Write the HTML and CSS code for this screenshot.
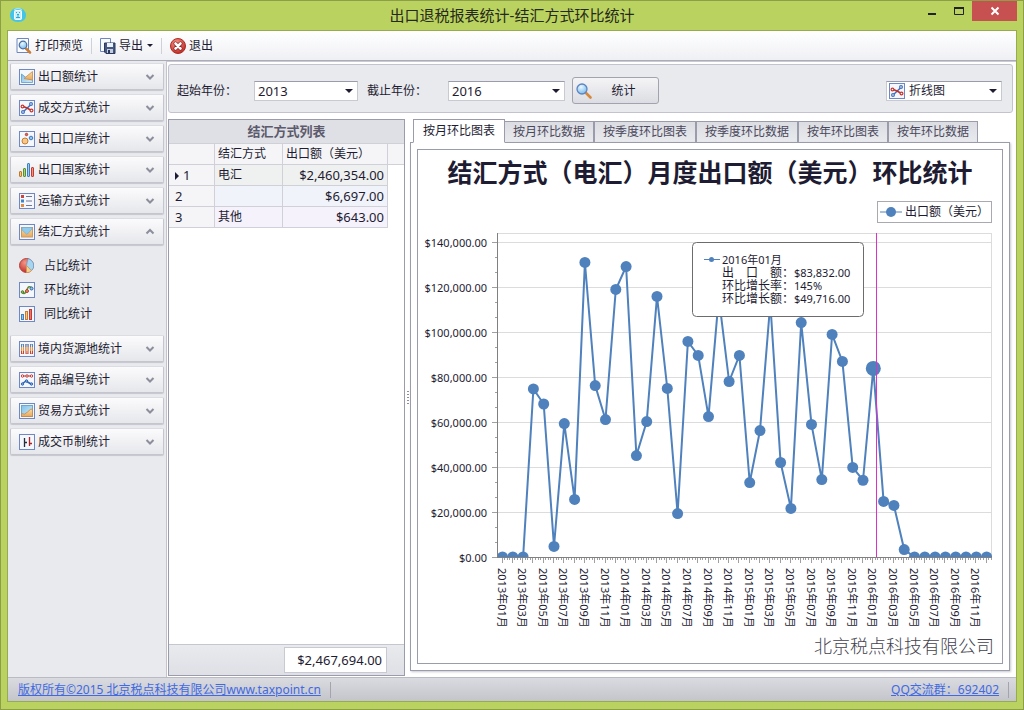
FILE: index.html
```html
<!DOCTYPE html>
<html lang="zh-CN">
<head>
<meta charset="utf-8">
<title>出口退税报表统计-结汇方式环比统计</title>
<link rel="stylesheet" href="styles.css">
</head>
<body>
<svg class="sprite" aria-hidden="true">
  <defs>
    <linearGradient id="sky" x1="0" y1="0" x2="1" y2="1"><stop offset="0" stop-color="#7fc0ea"/><stop offset="1" stop-color="#d3ecf8"/></linearGradient>
    <linearGradient id="sand" x1="0" y1="0" x2="0" y2="1"><stop offset="0" stop-color="#f8dca0"/><stop offset="1" stop-color="#eaa75c"/></linearGradient>
    <radialGradient id="redball" cx=".4" cy=".3" r=".8"><stop offset="0" stop-color="#f4988a"/><stop offset="1" stop-color="#b81f1a"/></radialGradient>
    <radialGradient id="lens" cx=".4" cy=".3" r=".8"><stop offset="0" stop-color="#eaf8ff"/><stop offset="1" stop-color="#6db4ea"/></radialGradient>
  </defs>
  <symbol id="frame" viewBox="0 0 16 16"><rect x=".5" y=".5" width="15" height="15" fill="#f4f7fc" stroke="#6f88c4"/></symbol>
  <symbol id="i-area" viewBox="0 0 16 16"><use href="#frame"/><path d="M2.500 5l5 4 6 2v2.500h-11z" fill="url(#sky)" stroke="#5c9bcc" stroke-width=".8"/><path d="M5 9.500l8.500-7v8.500z" fill="url(#sand)" stroke="#c78a4a" stroke-width=".8"/></symbol>
  <symbol id="i-cross" viewBox="0 0 16 16"><use href="#frame"/><path d="M3.500 12.500L12.500 4" stroke="#3f6fc0" stroke-width="1.500"/><path d="M3 6l5 2 4.500 2.500" stroke="#c0302a" stroke-width="1.500" fill="none"/><g fill="#fff" stroke-width="1.200"><g stroke="#3f6fc0"><circle cx="4" cy="12" r="1.400"/><circle cx="12" cy="4" r="1.400"/></g><g stroke="#c8352e"><circle cx="3.500" cy="6.500" r="1.400"/><circle cx="12.500" cy="10.500" r="1.400"/></g></g></symbol>
  <symbol id="i-bubble" viewBox="0 0 16 16"><use href="#frame"/><circle cx="6" cy="10" r="3" fill="#f4c98a" stroke="#c67a35"/><circle cx="12" cy="7" r="1.800" fill="#8fc4ee" stroke="#3d79bb"/><circle cx="7.500" cy="3.500" r="1.200" fill="#e06858" stroke="#b83a31"/></symbol>
  <symbol id="i-bars" viewBox="0 0 16 16"><g stroke-width="1"><rect x=".5" y="9.500" width="2" height="5" rx=".5" fill="#f6c378" stroke="#bd7829"/><rect x="4.500" y="6.500" width="2" height="8" rx=".5" fill="#a9d47b" stroke="#5b8e2c"/><rect x="8.500" y="1.500" width="2" height="13" rx=".5" fill="#9accf3" stroke="#3f7fc0"/><rect x="12.500" y="5.500" width="2" height="9" rx=".5" fill="#f19383" stroke="#c33b32"/></g></symbol>
  <symbol id="i-list" viewBox="0 0 16 16"><use href="#frame"/><rect x="2" y="2" width="3" height="3" fill="#cd463b"/><rect x="2" y="6.500" width="3" height="3" fill="#3f85cb"/><rect x="2" y="11" width="3" height="3" fill="#e28a3d"/><path d="M7 3.500h6M7 8h6M7 12.500h6" stroke="#6f7896"/></symbol>
  <symbol id="i-mail" viewBox="0 0 16 16"><use href="#frame"/><rect x="2.500" y="3.500" width="11" height="9.500" fill="url(#sand)" stroke="#c79a62"/><path d="M3 3.500h10v1.500l-4.500 5h-1L3 6z" fill="#8ecbee" stroke="#6fa9cf" stroke-width=".6"/></symbol>
  <symbol id="i-pie" viewBox="0 0 16 16"><circle cx="7.500" cy="7.500" r="7" fill="url(#redball)" stroke="#b6423c"/><path d="M7.500 7.500L9 .7a7 7 0 0 1 3.500 12z" fill="#a6d5f2" stroke="#5c9dcc" stroke-width=".6"/><path d="M7.500 7.500l5 5.200a7 7 0 0 1-5 1.900z" fill="#f7cf8c" stroke="#cf9950" stroke-width=".6"/></symbol>
  <symbol id="i-curve" viewBox="0 0 16 16"><use href="#frame"/><path d="M3.500 10.500q1.500 2 3 0t2-4q1-3 4-1" fill="none" stroke="#5c8f34" stroke-width="1.500"/><circle cx="3.500" cy="10" r="1.300" fill="#8dc059" stroke="#4c7d2a"/><circle cx="8" cy="9" r="1.500" fill="#ed8b62" stroke="#b93f28"/><circle cx="12.500" cy="6.500" r="1.500" fill="#8fc6ef" stroke="#2e62a8"/></symbol>
  <symbol id="i-bars2" viewBox="0 0 16 16"><use href="#frame"/><rect x="2.500" y="8.500" width="2" height="5" fill="#90c7f1" stroke="#417fbe"/><rect x="6.500" y="5.500" width="2" height="8" fill="#f7c77d" stroke="#c27c33"/><rect x="10.500" y="3.500" width="2" height="10" fill="#ee7465" stroke="#c23b32"/></symbol>
  <symbol id="i-stack" viewBox="0 0 16 16"><use href="#frame"/><g id="st"><rect x="2" y="3" width="3" height="10" fill="#c8423a"/><rect x="2" y="3" width="3" height="3" fill="#4a8acb"/><rect x="2" y="6" width="3" height="4" fill="#e09a4c"/><path d="M3.500 3.500v9" stroke="#fbe3c8"/></g><use href="#st" x="4.500"/><use href="#st" x="9"/></symbol>
  <symbol id="i-lines" viewBox="0 0 16 16"><use href="#frame"/><path d="M3 4h10" stroke="#c8352e"/><path d="M3 12l4-3 5 3" fill="none" stroke="#2f65b4" stroke-width="1.500"/><g fill="#fff" stroke="#c8352e"><circle cx="3.500" cy="4" r="1.200"/><circle cx="8" cy="4" r="1.200"/><circle cx="12.500" cy="4" r="1.200"/></g><g fill="#7db2e6" stroke="#2f65b4"><circle cx="3.500" cy="12" r="1.200"/><circle cx="7.500" cy="9" r="1.200"/><circle cx="12.500" cy="12" r="1.200"/></g></symbol>
  <symbol id="i-hill" viewBox="0 0 16 16"><use href="#frame"/><rect x="2.500" y="2.500" width="11" height="11" fill="url(#sky)" stroke="#6fa6cc"/><path d="M2.500 10.500q3 2 6-1.500t5-3v7.500h-11z" fill="url(#sand)" stroke="#c0874a" stroke-width=".8"/></symbol>
  <symbol id="i-stock" viewBox="0 0 16 16"><use href="#frame"/><path d="M5.500 4v9M5.500 8.500H8" stroke="#272b3a" stroke-width="1.300"/><path d="M10.500 3v9M10.500 9.500H13" stroke="#b21f24" stroke-width="1.300"/></symbol>
  <symbol id="i-preview" viewBox="0 0 16 16"><path d="M1 .5h11.500v14H1z" fill="#fafcff" stroke="#6d86bd"/><path d="M10 10.500l4 4" stroke="#c87c35" stroke-width="2.500" stroke-linecap="round"/><circle cx="7" cy="7" r="3.800" fill="url(#lens)" stroke="#4c6da0" stroke-width="1.200"/></symbol>
  <symbol id="i-export" viewBox="0 0 16 16"><path d="M.5.500h10v13H.500z" fill="#f8fbff" stroke="#6d86bd"/><path d="M4.500 5h10.500v10.500H6L4.500 14z" fill="#46587f" stroke="#2b3a5c"/><rect x="7" y="5" width="6" height="4" fill="#e9f1fb"/><rect x="7" y="11" width="6" height="4" fill="#c5cede"/><rect x="8" y="12" width="2" height="3" fill="#2b3a5c"/></symbol>
  <symbol id="i-exit" viewBox="0 0 16 16"><circle cx="8" cy="8" r="7.500" fill="url(#redball)" stroke="#b02b25"/><path d="M5.500 5.500l5 5M10.500 5.500l-5 5" stroke="#8d1a18" stroke-width="4" stroke-linecap="round"/><path d="M5.500 5.500l5 5M10.500 5.500l-5 5" stroke="#fff" stroke-width="2.600" stroke-linecap="round"/></symbol>
  <symbol id="i-search" viewBox="0 0 16 16"><path d="M10 10l4.500 4.500" stroke="#d6893e" stroke-width="2.600" stroke-linecap="round"/><circle cx="6" cy="6" r="5" fill="url(#lens)" stroke="#5d84c0" stroke-width="1.300"/></symbol>
  <symbol id="i-app" viewBox="0 0 16 16"><path d="M4 1.500h8q4 3 4 6.500 0 7-8 7T0 8q0-4 4-6.500z" fill="#43c4ea"/><path d="M4 3q4-3 8 0" fill="none" stroke="#9ee6f8" stroke-width="1.500"/><rect x="4.500" y="3.500" width="7" height="9" rx="1" fill="#c8f1fb" stroke="#fff"/><path d="M6 5.500h1M9 5.500h1M7 7.500h2M6 10.500h4M8 8v2" stroke="#2fa9d4"/></symbol>
  <symbol id="i-down" viewBox="0 0 10 8"><path d="M1.500 2L5 5.500 8.500 2" fill="none" stroke="#8d8e9c" stroke-width="2"/></symbol>
  <symbol id="i-up" viewBox="0 0 10 8"><path d="M1.500 5.500L5 2l3.500 3.500" fill="none" stroke="#8d8e9c" stroke-width="2"/></symbol>
</svg>

<div class="window">
  <header class="titlebar">
    <svg class="icon app-icon"><use href="#i-app"/></svg>
    <h1 class="window-title">出口退税报表统计-结汇方式环比统计</h1>
    <div class="window-buttons">
      <button class="win-btn" aria-label="最小化"><svg width="10" height="10"><path d="M1 8h8" stroke="#222" stroke-width="2"/></svg></button>
      <button class="win-btn" aria-label="最大化"><svg width="10" height="10"><path d="M.5 1v7.500h9V1" fill="none" stroke="#222"/><path d="M0 2h10" stroke="#222" stroke-width="2"/></svg></button>
      <button class="win-btn win-close" aria-label="关闭"><svg width="10" height="10"><path d="M1.500 1.500l7 7M8.500 1.500l-7 7" stroke="#fff" stroke-width="2"/></svg></button>
    </div>
  </header>

  <div class="client">
    <div class="toolbar">
      <button class="tool"><svg class="icon"><use href="#i-preview"/></svg>打印预览</button>
      <span class="tool-sep"></span>
      <button class="tool"><svg class="icon"><use href="#i-export"/></svg>导出<span class="caret"></span></button>
      <span class="tool-sep"></span>
      <button class="tool"><svg class="icon"><use href="#i-exit"/></svg>退出</button>
    </div>

    <div class="body">
      <nav class="sidebar">
        <button class="group"><svg class="icon"><use href="#i-area"/></svg><span>出口额统计</span><svg class="chev"><use href="#i-down"/></svg></button>
        <button class="group"><svg class="icon"><use href="#i-cross"/></svg><span>成交方式统计</span><svg class="chev"><use href="#i-down"/></svg></button>
        <button class="group"><svg class="icon"><use href="#i-bubble"/></svg><span>出口口岸统计</span><svg class="chev"><use href="#i-down"/></svg></button>
        <button class="group"><svg class="icon"><use href="#i-bars"/></svg><span>出口国家统计</span><svg class="chev"><use href="#i-down"/></svg></button>
        <button class="group"><svg class="icon"><use href="#i-list"/></svg><span>运输方式统计</span><svg class="chev"><use href="#i-down"/></svg></button>
        <button class="group" aria-expanded="true"><svg class="icon"><use href="#i-mail"/></svg><span>结汇方式统计</span><svg class="chev"><use href="#i-up"/></svg></button>
        <div class="group-items">
          <a class="item" href="#"><svg class="icon"><use href="#i-pie"/></svg>占比统计</a>
          <a class="item" href="#"><svg class="icon"><use href="#i-curve"/></svg>环比统计</a>
          <a class="item" href="#"><svg class="icon"><use href="#i-bars2"/></svg>同比统计</a>
        </div>
        <button class="group"><svg class="icon"><use href="#i-stack"/></svg><span>境内货源地统计</span><svg class="chev"><use href="#i-down"/></svg></button>
        <button class="group"><svg class="icon"><use href="#i-lines"/></svg><span>商品编号统计</span><svg class="chev"><use href="#i-down"/></svg></button>
        <button class="group"><svg class="icon"><use href="#i-hill"/></svg><span>贸易方式统计</span><svg class="chev"><use href="#i-down"/></svg></button>
        <button class="group"><svg class="icon"><use href="#i-stock"/></svg><span>成交币制统计</span><svg class="chev"><use href="#i-down"/></svg></button>
      </nav>

      <main class="main">
        <form class="filters">
          <label for="from">起始年份：</label>
          <div class="select select-from"><select id="from"><option>2013</option><option>2014</option><option>2015</option><option>2016</option></select><span class="caret"></span></div>
          <label for="to">截止年份：</label>
          <div class="select select-to"><select id="to"><option>2016</option><option>2015</option><option>2014</option><option>2013</option></select><span class="caret"></span></div>
          <button class="run" type="button"><svg class="icon"><use href="#i-search"/></svg><span>统计</span></button>
          <div class="select select-kind"><svg class="icon"><use href="#i-cross"/></svg><select class="cjk" aria-label="图表类型"><option>折线图</option></select><span class="caret"></span></div>
        </form>

        <div class="work">
          <section class="list">
            <h2 class="list-title">结汇方式列表</h2>
            <table class="grid">
              <colgroup><col class="c-no"><col class="c-way"><col class="c-sum"><col></colgroup>
              <thead><tr><th></th><th>结汇方式</th><th>出口额（美元）</th><th></th></tr></thead>
              <tbody>
                <tr class="current"><td class="no"><span class="marker"></span>1</td><td>电汇</td><td class="num">$2,460,354.00</td><td class="rest"></td></tr>
                <tr class="even"><td class="no">2</td><td></td><td class="num">$6,697.00</td><td class="rest"></td></tr>
                <tr class="odd"><td class="no">3</td><td>其他</td><td class="num">$643.00</td><td class="rest"></td></tr>
              </tbody>
            </table>
            <div class="list-foot"><output class="total">$2,467,694.00</output></div>
          </section>

          <div class="splitter"><span class="grip"></span></div>

          <section class="charts">
            <div class="tabs" role="tablist">
              <button class="tab active" role="tab" aria-selected="true">按月环比图表</button>
              <button class="tab" role="tab">按月环比数据</button>
              <button class="tab" role="tab">按季度环比图表</button>
              <button class="tab" role="tab">按季度环比数据</button>
              <button class="tab" role="tab">按年环比图表</button>
              <button class="tab" role="tab">按年环比数据</button>
            </div>
            <div class="page" role="tabpanel">
              <div class="chart">
                <h2 class="chart-title">结汇方式（电汇）月度出口额（美元）环比统计</h2>
                <div class="legend"><svg width="22" height="12"><path d="M0 6h22" stroke="#4f81bd"/><circle cx="11" cy="6" r="5" fill="#4f81bd"/></svg>出口额（美元）</div>
                <svg class="plot" id="plot" viewBox="0 0 584 406" preserveAspectRatio="xMidYMin meet" role="img" aria-label="月度出口额折线图"></svg>
                <div class="company">北京税点科技有限公司</div>
              </div>
            </div>
          </section>
        </div>
      </main>
    </div>

    <footer class="status">
      <a href="#">版权所有©2015 北京税点科技有限公司www.taxpoint.cn</a>
      <span class="status-sep"></span>
      <a class="qq" href="#">QQ交流群：692402</a>
      <span class="status-sep"></span>
    </footer>
  </div>
</div>
<script src="chart.js"></script>
</body>
</html>
```

FILE: styles.css
```css
* { box-sizing: border-box; }
html, body { height: 100%; margin: 0; }
body {
  font: 12px/16px "Noto Sans", "Noto Sans CJK SC", sans-serif;
  color: #1e1c32;
}
button, select { font: inherit; color: inherit; margin: 0; }
h1, h2 { margin: 0; font-weight: normal; }
.sprite { position: absolute; width: 0; height: 0; }
.icon { width: 16px; height: 16px; flex: none; }

.window {
  display: flex;
  flex-direction: column;
  height: 100%;
  padding: 0 6px 7px;
  background: #bad25f;
  border: 1px solid #8c9f48;
}
.titlebar {
  display: grid;
  grid-template-columns: 1fr auto 1fr;
  height: 29px;
  flex: none;
}
.app-icon { margin: 6px 3px; }
.window-title { font-size: 15px; line-height: 29px; color: #26291a; }
.window-buttons { display: flex; justify-content: flex-end; align-items: flex-start; }
.win-btn {
  display: grid;
  place-items: center;
  width: 27px;
  height: 20px;
  padding: 0;
  border: 0;
  background: none;
}
.win-close { width: 45px; background: #c75050; }

.client {
  flex: 1;
  min-height: 0;
  display: flex;
  flex-direction: column;
  border: 1px solid #97ab50;
  background: #e9eaee;
}
.toolbar {
  display: flex;
  align-items: center;
  gap: 8px;
  height: 30px;
  flex: none;
  padding: 0 8px;
  background: linear-gradient(#fff, #eff0f4);
  border-bottom: 1px solid #abacb8;
}
.tool {
  display: flex;
  align-items: center;
  gap: 3px;
  padding: 0;
  border: 0;
  background: none;
}
.caret {
  flex: none;
  border: 3px solid transparent;
  border-top: 4px solid #1e1c32;
  border-bottom: 0;
}
.tool .caret { margin-left: 1px; border-top-width: 3px; }
.tool-sep { width: 1px; height: 16px; background: #cfd0d8; }

.body { flex: 1; min-height: 0; display: flex; }
.sidebar {
  display: flex;
  flex-direction: column;
  gap: 4px;
  width: 158px;
  flex: none;
  padding: 2px 2px 0;
}
.group {
  display: flex;
  align-items: center;
  gap: 3px;
  height: 27px;
  padding: 0 8px;
  border: 1px solid #c4c5cd;
  border-top-color: #dcdde2;
  border-radius: 2px;
  background: linear-gradient(#fbfbfc, #e6e7eb);
  box-shadow: 0 1px 1px #c5c6cf;
}
.chev { width: 10px; height: 8px; margin-left: auto; }
.group-items { padding: 5px 0; }
.item {
  display: flex;
  align-items: center;
  gap: 9px;
  height: 24px;
  padding-left: 9px;
  color: inherit;
  text-decoration: none;
}

.main {
  flex: 1;
  min-width: 0;
  display: flex;
  flex-direction: column;
  padding: 2px 3px 1px 1px;
  background: #fff;
  border-left: 1px solid #c2c3cc;
  border-top: 1px solid #c9cad3;
}
.filters {
  display: flex;
  align-items: center;
  height: 49px;
  flex: none;
  padding: 4px 10px 0 8px;
  background: #e9eaee;
  border: 1px solid #c2c3ce;
  border-radius: 3px;
}
.filters label { width: 60px; flex: none; }
.select {
  display: flex;
  align-items: center;
  height: 20px;
  padding-right: 4px;
  background: #fff;
  border: 1px solid #c8c9d1;
  border-top-color: #9b9cab;
}
.select select {
  flex: 1;
  min-width: 0;
  height: 18px;
  padding: 0 3px;
  border: 0;
  background: none;
  appearance: none;
  font-size: 13px;
  line-height: 18px;
}
.select .cjk { font-size: 12px; padding: 0 4px; }
.select .caret { border-width: 4px 4px 0; }
.select-from { width: 104px; margin: 0 9px 0 17px; }
.select-to { width: 117px; margin: 0 7px 0 21px; }
.select-kind { width: 116px; margin-left: auto; padding-left: 2px; }
.run {
  display: flex;
  align-items: center;
  width: 87px;
  height: 27px;
  padding: 0 3px;
  border: 1px solid #a2a3af;
  border-radius: 3px;
  background: linear-gradient(#f4f4f6, #dcdde2);
}
.run span { flex: 1; }

.work { flex: 1; min-height: 0; display: flex; padding-top: 6px; }
.list {
  display: flex;
  flex-direction: column;
  width: 237px;
  flex: none;
  border: 1px solid #9b9cab;
}
.list-title {
  height: 23px;
  flex: none;
  background: #dfe0e5;
  color: #5c5a6c;
  font-size: 13px;
  font-weight: bold;
  line-height: 23px;
  text-align: center;
}
.grid { width: 100%; table-layout: fixed; border-collapse: separate; border-spacing: 0; }
.c-no { width: 46px; }
.c-way { width: 68px; }
.c-sum { width: 105px; }
.grid th, .grid td {
  height: 21px;
  padding: 0 3px;
  border-right: 1px solid #cfd0d8;
  border-bottom: 1px solid #cfd0d8;
  font-weight: normal;
  text-align: left;
  white-space: nowrap;
}
.grid th { background: #f5f5f7; border-top: 1px solid #cfd0d8; height: 22px; }
.grid th:last-child { border-right: 0; }
.grid td.no { padding-left: 6px; font-size: 13px; background: #f5f5f7; }
.grid td.num { text-align: right; font-size: 13px; }
.grid td.rest { border: 0; background: #fff; }
.current td { background: #eff0f0; }
.even td { background: #f0f4fa; }
.odd td { background: #f5f2fc; }
.marker {
  display: inline-block;
  margin-right: 4px;
  border: 4px solid transparent;
  border-left-color: #1e1c32;
  border-right: 0;
}
.list-foot {
  display: flex;
  justify-content: flex-end;
  margin-top: auto;
  height: 31px;
  padding: 2px 17px 2px 0;
  background: linear-gradient(#e9eaee, #dfe0e5);
  border-top: 1px solid #c5c6cf;
}
.total {
  width: 103px;
  height: 26px;
  padding-right: 4px;
  background: #fff;
  border: 1px solid #c8c9d3;
  font-size: 13px;
  line-height: 24px;
  text-align: right;
}
.splitter { width: 5px; flex: none; display: grid; place-items: center; }
.grip { width: 2px; height: 14px; background: repeating-linear-gradient(#8d8e9c 0 1px, #fff 1px 3px); }

.charts { flex: 1; min-width: 0; display: flex; flex-direction: column; }
.tabs { display: flex; align-items: flex-end; height: 23px; flex: none; padding-left: 3px; }
.tab {
  height: 22px;
  margin-bottom: -1px;
  padding: 0 8px;
  border: 1px solid #9b9cab;
  border-left-width: 0;
  background: linear-gradient(#dcdde2, #e9eaee);
  color: #4a485c;
  white-space: nowrap;
}
.tab + .tab { border-right-width: 2px; }
.tab + .tab:last-child { border-right-width: 1px; }
.tab.active {
  height: 24px;
  padding: 0 9px;
  border-left-width: 1px;
  border-bottom-color: #fff;
  background: #fff;
  color: #1e1c32;
  position: relative;
}
.page {
  flex: 1;
  min-height: 0;
  display: flex;
  margin: 0 3px 5px 0;
  padding: 6px;
  border: 1px solid #9b9cab;
  box-shadow: 1px 1px 2px #c8c9d1;
}
.chart {
  flex: 1;
  min-width: 0;
  display: flex;
  flex-direction: column;
  border: 1px solid #9b9cab;
}
.chart-title {
  font-size: 25px;
  font-weight: bold;
  line-height: 44px;
  text-align: center;
  white-space: nowrap;
}
.legend {
  display: flex;
  align-items: center;
  align-self: flex-end;
  gap: 3px;
  height: 22px;
  margin: 7px 10px 1px 0;
  padding: 0 2px;
  border: 1px solid #a9aab0;
}
.plot { flex: 1; min-height: 0; width: 100%; font-size: 11px; fill: #1e1c32; }
.plot .grid-line { stroke: #dcdcdc; }
.plot .axis { stroke: #808080; }
.plot .tick { stroke: #a0a0a0; }
.plot .series { fill: none; stroke: #4f81bd; stroke-width: 2; }
.plot .tip-key { stroke: #4f81bd; }
.plot .dot { fill: #4f81bd; }
.plot .cursor { stroke: #dd30c8; }
.plot .tip-box { fill: #fff; stroke: #6c6c6c; }
.plot .tip-label { font-size: 12px; }
.company {
  padding: 0 8px 3px;
  font-size: 18px;
  font-weight: 300;
  line-height: 28px;
  text-align: right;
  color: #44434f;
}

.status {
  display: flex;
  align-items: center;
  height: 24px;
  flex: none;
  padding: 0 7px 0 10px;
  background: linear-gradient(#dadbe0, #c4c5cb);
  border-top: 1px solid #b9bac3;
}
.status a { color: #4169e1; white-space: nowrap; }
.status .qq { margin-left: auto; }
.status-sep { width: 1px; height: 16px; margin-left: 9px; background: #a3a4ad; }
```

FILE: chart.js
```js
const values = [
  0, 0, 0, 74700, 68000, 4700, 59300, 25600, 130900, 76200, 61100, 118900,
  129100, 45100, 60200, 115800, 74900, 19300, 95800, 89600, 62400, 115500, 78000, 89600,
  33100, 56200, 112900, 42000, 21600, 104200, 58900, 34400, 98900, 86900, 39800, 34116,
  83832, 24700, 22900, 3300, 0, 0, 0, 0, 0, 0, 0, 0
];
const selected = 36;
const left = 80, right = 574, top0 = 9, base = 333;
const step = 10.3;
const px = i => left + 4.5 + i * step;
const py = v => base - v * 45 / 20000;
const crisp = n => Math.round(n) + 0.5;
const line = (cls, x1, y1, x2, y2) =>
  `<line class="${cls}" x1="${x1}" y1="${y1}" x2="${x2}" y2="${y2}"/>`;

let out = `<clipPath id="area"><rect x="${left - 1}" y="${top0}" width="${right - left + 1}" height="${base - top0 + 1}"/></clipPath>`;
out += line('grid-line', left, crisp(top0), right, crisp(top0));
out += line('grid-line', crisp(right - 1), top0, crisp(right - 1), base);

for (let v = 0; v <= 140000; v += 20000) {
  const y = crisp(py(v));
  if (v) out += line('grid-line', left, y, right, y);
  out += line('tick', left - 6, y, left, y);
  if (v < 140000) {
    out += line('tick', left - 3, y - 15, left, y - 15);
    out += line('tick', left - 3, y - 30, left, y - 30);
  }
  out += `<text x="69" y="${y + 4}" text-anchor="end">$${v.toLocaleString('en-US')}.00</text>`;
}

out += '<g clip-path="url(#area)">';
out += `<polyline class="series" points="${values.map((v, i) => px(i) + ',' + py(v)).join(' ')}"/>`;
values.forEach((v, i) => {
  out += `<circle class="dot" cx="${px(i)}" cy="${py(v)}" r="${i === selected ? 7.5 : 5.5}"/>`;
});
out += '</g>';

out += line('axis', left - 0.5, top0, left - 0.5, base + 1);
out += line('axis', left - 1, base + 0.5, right, base + 0.5);
values.forEach((v, i) => {
  const x = crisp(px(i) - 1);
  out += line('tick', x, base + 1, x, base + 6);
  for (let k = 1; k < 4; k++) {
    const m = crisp(px(i) - 1 + k * step / 4);
    if (m < right) out += line('tick', m, base + 1, m, base + 3);
  }
  if (i % 2 === 0) {
    const year = 2013 + Math.floor(i / 12);
    const month = String(i % 12 + 1).padStart(2, '0');
    out += `<text transform="translate(${px(i) - 5} 344) rotate(90)">${year}年${month}月</text>`;
  }
});

out += line('cursor', 458.5, top0, 458.5, base);
out += '<rect class="tip-box" x="274.5" y="18.5" width="171" height="74" rx="4"/>';
out += '<path class="tip-key" d="M286 35.500h16"/><circle class="dot" cx="293.500" cy="35.500" r="2.500"/>';
out += '<text x="304" y="40">2016年01月</text>';
[['出　口　额：', '$83,832.00'], ['环比增长率：', '145%'], ['环比增长额：', '$49,716.00']].forEach(([k, v], i) => {
  const y = 53 + i * 13;
  out += `<text class="tip-label" x="304" y="${y}">${k}</text><text x="376" y="${y}">${v}</text>`;
});
document.getElementById('plot').innerHTML = out;
```
